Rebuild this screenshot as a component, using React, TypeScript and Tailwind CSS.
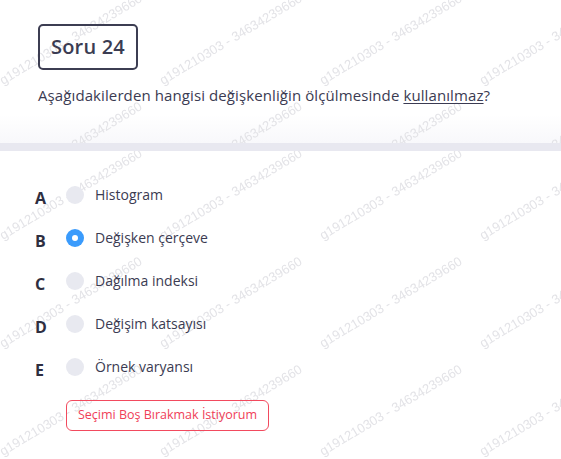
import { useId } from "react";

const options = [
  { key: "A", label: "Histogram" },
  { key: "B", label: "Değişken çerçeve" },
  { key: "C", label: "Dağılma indeksi" },
  { key: "D", label: "Değişim katsayısı" },
  { key: "E", label: "Örnek varyansı" },
];

const selected = "B";

// faint diagonal watermark repeated over a section
function Watermark({ offsetY }: { offsetY: number }) {
  const id = useId().replace(/:/g, "");
  return (
    <svg className="pointer-events-none absolute inset-0 h-full w-full" aria-hidden="true">
      <defs>
        <pattern id={id} width="160" height="108" patternUnits="userSpaceOnUse" y={offsetY}>
          <text
            x="3"
            y="100"
            transform="rotate(-31 3 100)"
            fontSize="13"
            fill="#e3e3e7"
            fontFamily="'Liberation Sans', Arial, sans-serif"
          >
            g191210303 - 34634239660
          </text>
        </pattern>
      </defs>
      <rect width="100%" height="100%" fill={`url(#${id})`} />
    </svg>
  );
}

export default function App() {
  return (
    <div className="w-[561px] h-[459px] overflow-hidden bg-white font-['Open_Sans','Noto_Sans',sans-serif] text-[#3b3b52]">
      {/* Question header */}
      <div className="relative h-[143px] bg-gradient-to-b from-white from-80% to-[#f8f8fb] px-[38px] pt-[24px]">
        <Watermark offsetY={-15} />
        <div className="relative inline-flex h-[46px] items-center rounded-[5px] border-2 border-[#3c3d52] px-[11px] text-[20px] font-semibold tracking-[0.2px] text-[#3b3c52]">
          Soru 24
        </div>
        <p className="relative mt-[14px] text-[15px] leading-[22px] tracking-[0.1px]">
          Aşağıdakilerden hangisi değişkenliğin ölçülmesinde{" "}
          <span className="underline underline-offset-2">kullanılmaz</span>?
        </p>
      </div>

      <div className="h-[8px] bg-[#e8e8f0]" />

      {/* Options */}
      <div className="relative h-[308px] pt-[22px]">
        <Watermark offsetY={-11} />
        <div className="relative flex flex-col">
          {options.map((o) => (
            <div key={o.key} className="flex h-[43px] items-center pl-[35px]">
              <span className="w-[31px] pt-[6px] text-[16px] font-bold text-[#2e2e40]">{o.key}</span>
              {o.key === selected ? (
                <span className="flex h-[18px] w-[18px] items-center justify-center rounded-full bg-[#3a9bfc]">
                  <span className="h-[6px] w-[6px] rounded-full bg-white" />
                </span>
              ) : (
                <span className="h-[18px] w-[18px] rounded-full bg-[#e8e9f0]" />
              )}
              <span className="ml-[11px] text-[14px] text-[#3b3b52]">{o.label}</span>
            </div>
          ))}
        </div>
        <button className="relative ml-[66px] mt-[12px] h-[31px] w-[203px] rounded-[6px] border border-[#f24a5e] text-[12.5px] text-[#f04058]">
          Seçimi Boş Bırakmak İstiyorum
        </button>
      </div>
    </div>
  );
}
